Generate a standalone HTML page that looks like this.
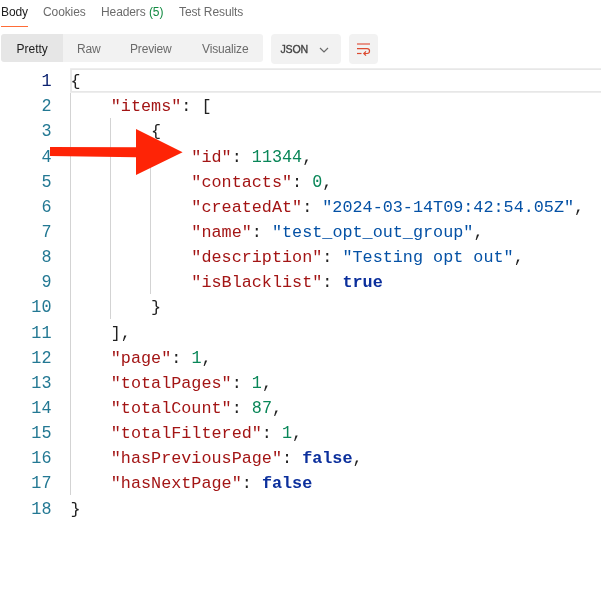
<!DOCTYPE html>
<html><head><meta charset="utf-8">
<style>
html,body{margin:0;padding:0;background:#fff;}
body{width:601px;height:590px;position:relative;overflow:hidden;will-change:transform;font-family:"Liberation Sans",sans-serif;color:#212121;}
.tab{position:absolute;top:4.4px;font-size:12px;letter-spacing:-0.1px;white-space:nowrap;color:#6b6b6b;line-height:16px;}
.tab.active{color:#212121;}
.tab .g{color:#128a42;}
.ul{position:absolute;left:1px;top:26px;width:27px;height:1px;background:#ff6c37;}
.grp{position:absolute;left:1.3px;top:34.2px;width:261.4px;height:27.7px;background:#f2f2f2;border-radius:3px;overflow:hidden;}
.grp .act{position:absolute;left:0;top:0;width:62px;height:28px;background:#e6e6e6;border-radius:3px 0 0 3px;}
.bt{position:absolute;top:40.7px;letter-spacing:-0.15px;font-size:12px;line-height:16px;color:#6b6b6b;white-space:nowrap;}
.json{position:absolute;left:270.5px;top:34.3px;width:70.4px;height:29.5px;background:#f2f2f2;border-radius:4px;}
.wrap{position:absolute;left:349px;top:34.3px;width:29.1px;height:29.5px;background:#f2f2f2;border-radius:4px;}
.code{position:absolute;left:0;top:69.2px;width:601px;font-family:"Liberation Mono",monospace;font-size:16.8px;line-height:25px;}
.ln{position:absolute;left:0;width:51.5px;text-align:right;color:#237893;height:25px;transform:scaleY(1.07);transform-origin:0 17px;}
.ln.cur{color:#0b216f;}
.tx{position:absolute;left:70.5px;white-space:pre;height:25px;color:#212121;}
.k{color:#a31515;}.s{color:#0451a5;}.n{color:#098658;display:inline-block;transform:scaleY(1.07);transform-origin:0 17px;}.b{color:#0b2f9c;font-weight:bold;}
.curline{position:absolute;left:70.3px;top:68.2px;width:540px;height:21.2px;border:1.7px solid #eee;}
.guide{position:absolute;width:1px;background:#d3d3d3;}
</style></head><body>
<div class="tab active" style="left:1px">Body</div>
<div class="tab" style="left:43px">Cookies</div>
<div class="tab" style="left:101px">Headers <span class="g">(5)</span></div>
<div class="tab" style="left:179px">Test Results</div>
<div class="ul"></div>
<div class="grp"><div class="act"></div></div>
<div class="bt" style="left:16.5px;color:#212121;letter-spacing:0">Pretty</div>
<div class="bt" style="left:77px">Raw</div>
<div class="bt" style="left:130px">Preview</div>
<div class="bt" style="left:202px">Visualize</div>
<div class="json"></div>
<div class="bt" style="left:280.5px;top:41.2px;color:#444;font-size:10.6px;letter-spacing:-0.2px;-webkit-text-stroke:0.35px #444">JSON</div>
<svg style="position:absolute;left:318.2px;top:44.8px" width="12" height="10" viewBox="0 0 12 10"><path d="M2 3 L6 7 L10 3" fill="none" stroke="#6b6b6b" stroke-width="1.2"/></svg>
<div class="wrap"></div>
<svg style="position:absolute;left:355px;top:40px" width="18" height="16" viewBox="0 0 18 16"><g fill="none" stroke="#dc4a30" stroke-width="1.2"><path d="M2 4 H15" stroke="#e57565" stroke-width="1.5"/><path d="M2 8.6 H12.1 a2.45 2.45 0 0 1 0 4.9 H9"/><path d="M2 13.5 H6.5"/><path d="M11 11.4 L8.8 13.5 L11 15.6"/></g></svg>
<svg style="position:absolute;left:0;top:0" width="601" height="590"><path d="M71.05 92.8 V69.1 H601 M70.3 91.9 H601" fill="none" stroke="#e7e7e7" stroke-width="1.8"/></svg>
<div class="guide" style="left:70px;top:93px;height:402px"></div>
<div class="guide" style="left:110px;top:118px;height:201px"></div>
<div class="guide" style="left:150px;top:143px;height:151px"></div>
<div class="code">
<div class="ln cur" style="top:0.0px">1</div><div class="tx" style="top:0.0px">{</div>
<div class="ln" style="top:25.14px">2</div><div class="tx" style="top:25.14px">    <span class="k">"items"</span>: [</div>
<div class="ln" style="top:50.28px">3</div><div class="tx" style="top:50.28px">        {</div>
<div class="ln" style="top:75.42px">4</div><div class="tx" style="top:75.42px">            <span class="k">"id"</span>: <span class="n">11344</span>,</div>
<div class="ln" style="top:100.56px">5</div><div class="tx" style="top:100.56px">            <span class="k">"contacts"</span>: <span class="n">0</span>,</div>
<div class="ln" style="top:125.7px">6</div><div class="tx" style="top:125.7px">            <span class="k">"createdAt"</span>: <span class="s">"2024-03-14T09:42:54.05Z"</span>,</div>
<div class="ln" style="top:150.84px">7</div><div class="tx" style="top:150.84px">            <span class="k">"name"</span>: <span class="s">"test_opt_out_group"</span>,</div>
<div class="ln" style="top:175.98px">8</div><div class="tx" style="top:175.98px">            <span class="k">"description"</span>: <span class="s">"Testing opt out"</span>,</div>
<div class="ln" style="top:201.12px">9</div><div class="tx" style="top:201.12px">            <span class="k">"isBlacklist"</span>: <span class="b">true</span></div>
<div class="ln" style="top:226.26px">10</div><div class="tx" style="top:226.26px">        }</div>
<div class="ln" style="top:251.4px">11</div><div class="tx" style="top:251.4px">    ],</div>
<div class="ln" style="top:276.54px">12</div><div class="tx" style="top:276.54px">    <span class="k">"page"</span>: <span class="n">1</span>,</div>
<div class="ln" style="top:301.68px">13</div><div class="tx" style="top:301.68px">    <span class="k">"totalPages"</span>: <span class="n">1</span>,</div>
<div class="ln" style="top:326.82px">14</div><div class="tx" style="top:326.82px">    <span class="k">"totalCount"</span>: <span class="n">87</span>,</div>
<div class="ln" style="top:351.96px">15</div><div class="tx" style="top:351.96px">    <span class="k">"totalFiltered"</span>: <span class="n">1</span>,</div>
<div class="ln" style="top:377.1px">16</div><div class="tx" style="top:377.1px">    <span class="k">"hasPreviousPage"</span>: <span class="b">false</span>,</div>
<div class="ln" style="top:402.24px">17</div><div class="tx" style="top:402.24px">    <span class="k">"hasNextPage"</span>: <span class="b">false</span></div>
<div class="ln" style="top:427.38px">18</div><div class="tx" style="top:427.38px">}</div>
</div>
<svg style="position:absolute;left:0;top:0" width="601" height="590"><polygon points="50,147 136,147.2 136,129 182.6,152.2 136,175 136,157.2 50,156.1" fill="#fe2406"/></svg>
</body></html>
